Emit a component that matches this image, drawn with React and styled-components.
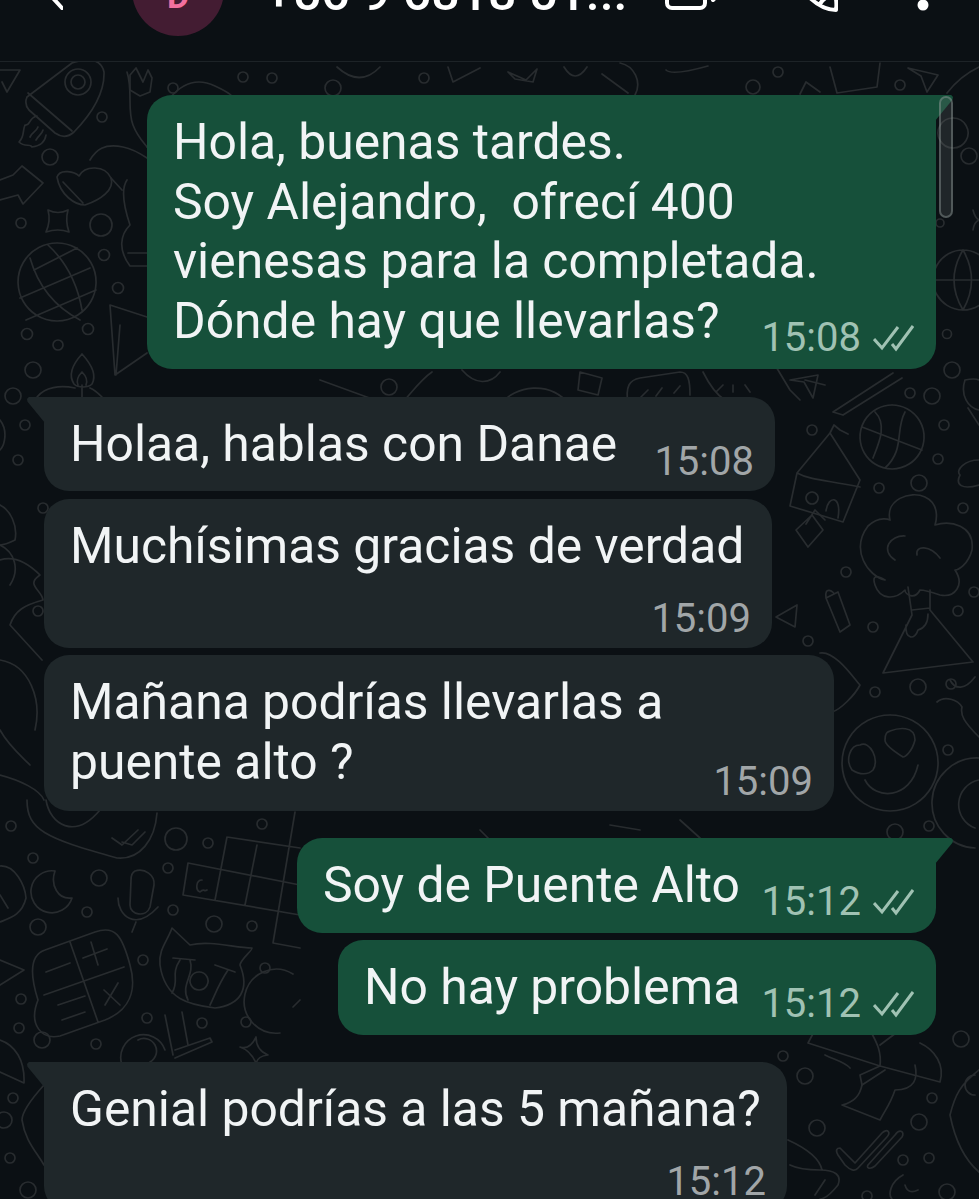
import styled, { createGlobalStyle } from "styled-components";

const GlobalStyle = createGlobalStyle`
  html, body {
    margin: 0;
    padding: 0;
    background: #0b1014;
    overflow: hidden;
  }
`;

const Page = styled.div`
  width: 979px;
  height: 1199px;
  overflow: hidden;
  display: flex;
  flex-direction: column;
  background: #0b1014;
  font-family: Roboto, "Liberation Sans", sans-serif;
`;

const Header = styled.header`
  height: 61px;
  flex: none;
  overflow: hidden;
  border-bottom: 1px solid #1d2327;
  box-sizing: content-box;
`;

const HeaderRow = styled.div`
  height: 60px;
  margin-top: -50px;
  display: flex;
  align-items: flex-end;
  padding-left: 48px;
`;

const Avatar = styled.div`
  width: 92px;
  height: 92px;
  flex: none;
  margin: 0 41px -26px 69px;
  border-radius: 50%;
  background: #431c32;
  color: #f2709f;
  font-size: 34px;
  font-weight: 700;
  text-align: center;
  line-height: 105px;
`;

const Phone = styled.div`
  width: 374px;
  flex: none;
  color: #fff;
  font-size: 50px;
  font-weight: 500;
  line-height: 56px;
  margin-bottom: -11px;
  white-space: nowrap;
`;

const HeaderIcon = styled.svg`
  flex: none;
  margin-left: ${(p) => p.$gap}px;
  margin-bottom: ${(p) => p.$drop || 0}px;
`;

const Chat = styled.main`
  flex: 1;
  position: relative;
  overflow: hidden;
  padding: 33px 43px 0 44px;
  display: flex;
  flex-direction: column;
`;

const Doodles = styled.svg`
  position: absolute;
  left: 0;
  top: 0;
  width: 979px;
  height: 1137px;
  fill: none;
  stroke: #282c2f;
  stroke-width: 1.7;
  stroke-linecap: round;
  stroke-linejoin: round;
`;

const Bubble = styled.div`
  position: relative;
  flex: none;
  box-sizing: border-box;
  width: ${(p) => p.$width}px;
  height: ${(p) => p.$height}px;
  margin-top: ${(p) => p.$top}px;
  align-self: ${(p) => (p.$sent ? "flex-end" : "flex-start")};
  padding: 18px ${(p) => (p.$sent ? 22 : 21)}px 17px 26px;
  display: flex;
  flex-direction: ${(p) => (p.$stacked ? "column" : "row")};
  justify-content: space-between;
  align-items: flex-end;
  background: ${(p) => (p.$sent ? "#16503a" : "#1f272a")};
  border-radius: 25px;
  ${(p) =>
    p.$tail &&
    (p.$sent ? "border-top-right-radius: 0;" : "border-top-left-radius: 0;")}

  &::before {
    content: "";
    display: ${(p) => (p.$tail ? "block" : "none")};
    position: absolute;
    top: 0;
    width: 18px;
    height: 26px;
    background: inherit;
    ${(p) =>
      p.$sent
        ? "right: -17px; clip-path: polygon(0 0, 90% 0, 100% 8%, 97% 18%, 0 100%);"
        : "left: -17px; clip-path: polygon(100% 0, 10% 0, 0 8%, 3% 18%, 100% 100%);"}
  }
`;

const Text = styled.div`
  align-self: flex-start;
  flex: 1;
  min-width: 0;
  color: #f1f4f5;
  font-size: 49.8px;
  line-height: 59.5px;
  white-space: pre;
`;

const Meta = styled.div`
  display: flex;
  align-items: center;
  gap: 12px;
  flex: none;
  height: 44px;
  margin-bottom: ${(p) => (p.$sent ? -7.5 : -9.5)}px;
  color: ${(p) => (p.$sent ? "#a0c2b3" : "#a1a6a8")};
  font-size: 40px;
  line-height: 44px;
`;

const Scrollbar = styled.div`
  position: absolute;
  left: 939px;
  top: 34px;
  width: 14px;
  height: 122px;
  box-sizing: border-box;
  border: 2px solid rgba(150, 160, 158, 0.42);
  border-radius: 7px;
  background: rgba(110, 120, 118, 0.22);
`;

const messages = [
  {
    id: 1,
    sent: true,
    tail: true,
    width: 789,
    height: 274,
    top: 0,
    text: "Hola, buenas tardes.\nSoy Alejandro,  ofrecí 400\nvienesas para la completada.\nDónde hay que llevarlas?",
    time: "15:08",
  },
  { id: 2, tail: true, width: 731, height: 94, top: 28, text: "Holaa, hablas con Danae", time: "15:08" },
  { id: 3, width: 728, height: 149, top: 8, stacked: true, text: "Muchísimas gracias de verdad", time: "15:09" },
  { id: 4, width: 790, height: 156, top: 7, text: "Mañana podrías llevarlas a\npuente alto ?", time: "15:09" },
  { id: 5, sent: true, tail: true, width: 639, height: 95, top: 27, text: "Soy de Puente Alto", time: "15:12" },
  { id: 6, sent: true, width: 598, height: 95, top: 7, text: "No hay problema", time: "15:12" },
  { id: 7, tail: true, width: 743, height: 149, top: 27, stacked: true, text: "Genial podrías a las 5 mañana?", time: "15:12" },
];

// small rings scattered over the wallpaper: x, y, r
const rings = [
  [50, 157, 8], [102, 117, 5], [21, 223, 5], [101, 225, 11], [104, 255, 5.5], [118, 288, 5.5],
  [88, 329, 5.5], [27, 334, 5.5], [58, 345, 5], [33, 370, 8], [13, 396, 8], [25, 425, 5],
  [18, 460, 5], [43, 508, 5], [38, 611, 5], [243, 77, 5], [272, 78, 5], [173, 88, 5],
  [424, 78, 5], [333, 88, 8], [753, 87, 7], [778, 72, 5], [900, 85, 5], [947, 334, 4.5],
  [952, 370, 8], [969, 156, 8], [940, 223, 4], [389, 387, 8], [812, 430, 5], [944, 425, 5],
  [938, 459, 5], [919, 483, 8], [879, 488, 5], [963, 508, 5], [910, 393, 5], [932, 396, 8],
  [846, 572, 5], [873, 627, 5], [958, 611, 5], [808, 641, 5], [918, 687, 8], [951, 684, 5],
  [875, 692, 5], [948, 750, 5], [929, 826, 5], [895, 832, 8], [974, 592, 5], [11, 826, 5],
  [33, 858, 5], [99, 878, 8], [87, 912, 5], [38, 927, 8], [168, 868, 5], [176, 839, 11],
  [208, 843, 5], [173, 910, 5], [214, 924, 8], [252, 926, 5], [262, 824, 5], [143, 960, 5],
  [265, 968, 5], [21, 999, 5], [147, 1018, 5], [202, 1023, 5], [246, 1022, 5], [19, 1028, 5],
  [42, 1040, 8], [96, 1044, 5], [783, 1056, 5], [805, 1076, 8], [817, 1128, 8], [932, 1098, 5],
  [919, 1122, 8], [903, 1160, 5], [929, 1158, 5], [947, 1192, 8], [961, 1039, 8], [867, 1196, 5],
  [13, 1098, 5], [10, 1158, 5], [28, 1190, 8], [4, 1120, 8], [78, 82, 13], [78, 82, 7],
];

const doodlePaths = [
  // plane, rocket, flame
  "M0 70H20L7 92 2 82",
  "M27 97 72 63Q100 54 104 72 105 100 74 132 65 140 55 133L29 110Q24 104 27 97Z",
  "M28 93 72 131",
  "M37 116C28 118 31 126 25 125 22 132 25 136 19 142 25 148 30 143 32 147 40 146 45 142 46 135",
  "M30 137C33 131 36 132 38 127M36 140C39 135 42 134 43 130",
  // arrow, sparkle, globe
  "M0 180 13 175 22 166 43 183 23 204 18 195 0 200",
  "M48 210Q58 215 68 210 65 221 69 232 58 228 46 232 51 221 48 210Z",
  "M57 243A39 39 0 1 0 57.1 243M30 258Q42 300 80 320M48 245Q75 270 82 310M20 298 90 268M26 320 96 290M34 270 77 248",
  // heart, glove, pyramid, candle
  "M57 177C60 168 75 172 79 176 85 165 105 165 111 178 115 190 100 200 85 205 75 205 60 195 57 177ZM63 182 83 203",
  "M90 160C96 150 104 143 123 147 133 149 141 154 147 158M127 180C120 190 125 210 130 225 120 235 118 250 130 266H147M111 178 122 190",
  "M147 253H128M110 305 115 375 147 353M110 305 147 317M120 325 116 375",
  "M82 354C72 365 68 375 74 384 78 388 88 388 92 384 97 375 92 365 82 354ZM82 372C78 376 76 380 78 385M82 372C86 376 88 380 86 385M82 385V397M37 397C45 387 60 385 75 388M90 388C95 390 98 393 102 397",
  "M127 72C133 90 127 110 133 125 138 138 146 145 147 147",
  "M130 75 136 68 143 82 148 70 152 78 150 92 140 96 130 90Z",
  // top strip
  "M337 67Q360 88 380 67M448 67 453 82 480 68M170 98Q190 74 215 86 228 92 232 96",
  "M564 67Q575 85 587 67M620 63A22 22 0 0 1 635 95M602 74 628 93M508 72 526 80 537 69 533 82 515 79 508 72",
  "M666 70Q672 76 708 66",
  "M830 67 837 93 877 87 880 63M908 68 938 75 927 92 921 76ZM947 93Q960 76 979 67",
  "M800 94 806 82 820 92",
  // right column
  "M963 250A30 30 0 1 0 963.1 250M936 280H992M963 250Q945 280 963 310M963 250Q980 280 963 310",
  "M953 118A15 15 0 1 0 953.1 118M973 210Q975 218 979 220 974 222 973 230",
  "M790 380 818 375 813 398 804 382ZM833 412 893 373M843 415 902 378M833 412 843 415",
  "M892 405A32 32 0 1 0 892.1 405M862 427 922 450M875 412C888 425 878 445 873 458M905 412C895 430 905 450 885 468",
  "M790 506 797 473 830 433 860 480 843 522ZM797 473C810 480 825 480 860 487M812 492A6 6 0 1 0 812.1 492M826 511C828 495 842 495 838 518M830 433 834 425 840 430 848 434",
  "M885 580C868 576 850 550 868 526 880 515 890 520 890 520 885 500 910 490 925 497 942 505 935 525 935 525 950 520 975 525 972 550 968 565 958 570 955 570 965 585 955 598 940 595 925 590 920 590 920 590 915 600 905 595 905 590 895 600 880 600 875 585 870 570 885 580 885 580Z",
  "M895 560C880 550 890 535 905 536M917 555C915 545 930 545 940 558",
  "M908 587 912 615 883 673 973 662 930 610 930 590M912 610 930 608 M906 625C905 640 915 640 918 630 925 628 928 622 928 614",
  "M796 530 812 515 823 530 808 547ZM806 524 815 510 825 520M826 598 840 632 850 625 838 592ZM826 598C824 585 834 592 834 594M776 617 797 605 795 627Z",
  "M820 653C835 650 855 680 860 685 855 695 840 710 832 712",
  "M890 715A48 48 0 1 0 890.1 715M860 745C870 740 880 760 873 770 868 775 860 775 852 770 845 760 850 745 860 745ZM890 731C898 728 915 725 915 740 912 752 905 757 903 757 895 752 885 745 885 740 885 732 888 732 890 731ZM865 780C875 800 910 800 918 765",
  "M979 758A45 45 0 0 0 975 848M979 780A25 25 0 0 0 975 828",
  "M937 702C945 695 958 700 962 707 960 715 964 722 979 737M950 680C955 690 965 690 975 677",
  // bottom left group
  "M27 800C27 830 45 838 117 858 140 860 155 840 157 813M46 800C50 825 75 840 100 810M112 838 122 845 138 830M122 842 132 845 145 832",
  "M0 866C15 865 25 885 26 898 22 915 10 918 0 922M0 895 8 908M55 871A21 21 0 1 0 72 898M55 871C50 885 58 900 72 898",
  "M135 871C145 868 155 875 154 885L150 907C146 918 130 915 130 905L131 880C131 875 133 872 135 871ZM118 898C118 915 135 932 158 907M136 922 132 932",
  "M227 837 300 848M188 863 300 885M183 895 300 915M188 863 183 895M227 837 215 900M257 845 245 905M295 812 273 943 300 948",
  "M202 880C196 880 195 890 200 892 204 888 204 892 207 890",
  "M45 950 95 932C115 925 122 935 130 965 137 990 130 1010 105 1020L60 1036C42 1040 28 1025 38 1000 30 975 30 955 45 950ZM70 942 98 1022M44 995 124 967M46 972 70 963M83 958 107 949M91 942 98 965M104 990 120 1005M118 983 105 1005M58 1005 85 996M62 1020 85 1012",
  "M172 928 190 945C210 940 235 948 252 948 253 950 240 960 240 965 250 990 240 1005 215 1008 190 1005 165 1000 160 965 158 950 168 940 172 928ZM173 958 195 960M215 965 235 972M180 960C170 975 180 980 172 993M190 960C195 975 180 985 188 1000M228 970C218 985 215 995 210 1005",
  "M199 972A9 9 0 1 0 199.1 972",
  "M293 974A32 32 0 1 0 280 1033M293 1007 300 1000",
  "M122 1065A22 22 0 0 1 165 1050M138 1040A12 12 0 0 1 150 1062M165 1015 173 1055M182 1012 188 1045M175 1050 210 1038 212 1042 175 1058",
  "M240 1047Q250 1050 256 1037 256 1050 268 1055 258 1056 256 1063 250 1050 240 1047Z",
  "M0 1040C15 1045 25 1060 24 1083L0 1072M0 960 24 970 0 985",
  "M44 1085C35 1095 22 1110 22 1120 25 1140 35 1150 44 1165",
  // gap under first bubble
  "M320 380 375 400M400 405C410 395 420 380 432 372M462 370C475 385 490 385 500 372M500 405C515 385 550 380 570 405",
  "M580 372 602 378 598 395 578 390ZM628 405C625 385 630 380 640 378L680 372C688 372 690 380 690 395M640 398 648 390M656 396 662 388M674 393 680 386M703 372C712 390 720 397 725 400M723 385 716 392M733 385V392M745 385 750 392",
  "M775 365 790 390 800 400M805 380 825 385",
  "M480 830 495 845M610 825 640 830M680 820 700 838",
  // parasol and friends
  "M808 1043 880 1066 940 1082M808 1043 815 1030M880 1066C882 1050 875 1040 870 1030M880 1066 860 1075 862 1085 885 1070M920 1043C935 1050 945 1065 940 1082M900 1030 880 1045",
  "M825 1055C835 1060 845 1062 850 1068M862 1085C860 1095 855 1102 842 1105L880 1120C885 1110 890 1105 895 1090 915 1090 918 1078 915 1065",
  "M840 1148 855 1163 882 1133C887 1128 892 1132 886 1138L858 1168C855 1172 850 1170 845 1165L838 1155C835 1150 837 1148 840 1148ZM868 1165 895 1135C900 1128 905 1132 902 1137L875 1166C870 1170 866 1168 868 1165Z",
  "M788 1140C810 1150 820 1160 822 1170M790 1165C800 1170 815 1170 820 1170 835 1170 842 1175 838 1185 830 1195 825 1199 820 1199M825 1180 815 1195",
  "M903 1175C890 1182 888 1195 892 1199M905 1185Q908 1195 918 1190",
  "M979 1070C960 1085 955 1095 950 1115 955 1140 965 1160 979 1172M975 1075A8 8 0 1 0 975 1095",
  // left edge
  "M0 420C8 430 5 445 0 450M0 505C10 510 18 525 15 540 5 545 0 545 0 545M0 560C15 555 30 565 40 575 25 585 42 590 43 600 25 605 15 610 10 625L42 660",
  "M0 660C30 665 42 700 35 730M0 730C8 745 20 755 30 765M0 775C20 780 40 790 44 800",
  "M0 545C15 552 20 570 10 585",
  // rest of the right edge
  "M965 380C975 378 979 380 979 380M965 380C960 395 968 408 979 410M968 408 979 425",
  "M960 475C955 470 965 460 979 460M960 475C955 485 962 490 979 485",
];

function CheckIcon() {
  return (
    <svg width="41" height="28" viewBox="0 0 41 28" fill="none" stroke="currentColor" strokeWidth="3">
      <path d="M1 15 9 24 25 3" />
      <path d="M19 20 23 25 40 2" />
    </svg>
  );
}

export default function App() {
  return (
    <Page>
      <GlobalStyle />
      <Header>
        <HeaderRow>
          <svg width="15" height="30" viewBox="0 0 15 30" fill="none" stroke="#fff" strokeWidth="4" strokeLinecap="round" style={{ flex: "none" }}>
            <path d="M14 28 3 16 14 2" />
          </svg>
          <Avatar>D</Avatar>
          <Phone>+56 9 6818 51...</Phone>
          <HeaderIcon $gap={26} width="52" height="40" viewBox="0 0 52 40" fill="none" stroke="#fff" strokeWidth="4">
            <rect x="2" y="2" width="38" height="36" rx="5" />
            <path d="M48 30 50 28" strokeLinecap="round" />
          </HeaderIcon>
          <HeaderIcon $gap={89} $drop={-2} width="32" height="42" viewBox="0 0 32 42" fill="none" stroke="#fff" strokeWidth="4" strokeLinejoin="round">
            <path d="M2 26C10 34 20 40 30 40 31 34 30 28 29 24 22 26 16 30 14 34" />
          </HeaderIcon>
          <HeaderIcon $gap={79} $drop={-1} width="12" height="12" viewBox="0 0 12 12">
            <circle cx="6" cy="6" r="5.5" fill="#fff" />
          </HeaderIcon>
        </HeaderRow>
      </Header>
      <Chat>
        <Doodles viewBox="0 62 979 1137">
          {rings.map(([x, y, r], i) => (
            <circle key={i} cx={x} cy={y} r={r} />
          ))}
          {doodlePaths.map((d, i) => (
            <path key={i} d={d} />
          ))}
        </Doodles>
        {messages.map((m) => (
          <Bubble key={m.id} $sent={m.sent} $tail={m.tail} $width={m.width} $height={m.height} $top={m.top} $stacked={m.stacked}>
            <Text>{m.text}</Text>
            <Meta $sent={m.sent}>
              {m.time}
              {m.sent && <CheckIcon />}
            </Meta>
          </Bubble>
        ))}
        <Scrollbar />
      </Chat>
    </Page>
  );
}
